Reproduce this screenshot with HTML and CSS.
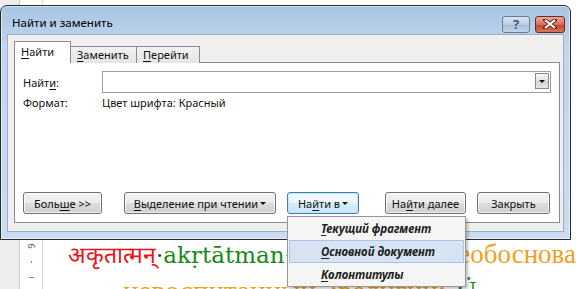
FILE: index.html
```html
<!DOCTYPE html>
<html lang="ru">
<head>
    <meta charset="UTF-8">
    <title>Найти и заменить</title>
    <link rel="stylesheet" href="styles.css">
</head>
<body>
    <div class="doc">
        <div class="ruler-gap"></div>
        <div class="ruler-strip">
            <span class="ruler-num">6</span>
            <span class="tick"></span>
            <span class="tick long"></span>
        </div>
        <div class="page">
            <div class="line line1">
                <span class="red">अकृतात्मन्</span><span class="dot">·</span><span class="green">akṛtātman</span><span class="dot">·</span><span class="orange">необоснованный</span>
            </div>
            <div class="line line2">
                <span class="orange">невоспитанный</span><span class="green">·</span><span class="orange">:религии:</span><span class="pink">·</span><span class="green">Ü</span>
            </div>
        </div>
    </div>

    <div class="dialog">
        <div class="titlebar">
            <span class="title">Найти и заменить</span>
            <div class="caption-buttons">
                <div class="cap-btn help">?</div>
                <div class="cap-btn close">
                    <svg width="14" height="10" viewBox="0 0 14 10">
                        <path d="M2 1 L12 9 M12 1 L2 9" stroke="#5a1a12" stroke-width="3.6" stroke-linecap="square"/>
                        <path d="M2 1 L12 9 M12 1 L2 9" stroke="#fff" stroke-width="2.2"/>
                    </svg>
                </div>
            </div>
        </div>
        <div class="client">
            <div class="tabs">
                <div class="tab active"><u>Н</u>айти</div>
                <div class="tab t2"><u>З</u>аменить</div>
                <div class="tab t3"><u>П</u>ерейти</div>
            </div>
            <div class="pane">
                <div class="row">
                    <span class="label">Найт<u>и</u>:</span>
                    <div class="combo">
                        <div class="combo-btn"><span class="arrow"></span></div>
                    </div>
                </div>
                <div class="row format">
                    <span class="label">Формат:</span>
                    <span>Цвет шрифта: Красный</span>
                </div>
                <div class="buttons">
                    <div class="btn more">Боль<u>ш</u>е &gt;&gt;</div>
                    <div class="btn reading"><u>В</u>ыделение при чтении <span class="tri"></span></div>
                    <div class="btn findin">На<u>й</u>ти в <span class="tri"></span></div>
                    <div class="btn next">На<u>й</u>ти далее</div>
                    <div class="btn closebtn">Закрыть</div>
                </div>
            </div>
        </div>
    </div>

    <div class="menu">
        <div class="menu-item"><u>Т</u>екущий фрагмент</div>
        <div class="menu-item selected"><u>О</u>сновной документ</div>
        <div class="menu-item"><u>К</u>олонтитулы</div>
    </div>
</body>
</html>
```

FILE: styles.css
```css
body {
    margin: 0;
    width: 576px;
    height: 289px;
    overflow: hidden;
    position: relative;
    background: #fff;
    font-family: "Noto Sans", Arial, sans-serif;
    font-size: 11px;
    color: #111;
}
u {
    text-decoration-thickness: 1px;
    text-underline-offset: 2px;
}

/* document behind the dialog */
.doc {
    display: flex;
    height: 289px;
    overflow: hidden;
}
.ruler-gap {
    flex-shrink: 0;
    width: 19px;
    background: #eeeeee;
    border-right: 1px solid #cfcfcf;
}
.ruler-strip {
    flex-shrink: 0;
    width: 23px;
    background: #fff;
    border-right: 1px solid #d8d8d8;
    display: flex;
    flex-direction: column;
    align-items: center;
    padding-top: 241px;
    box-sizing: border-box;
}
.ruler-num {
    font-size: 9px;
    color: #555;
    transform: rotate(90deg);
    line-height: 10px;
}
.tick {
    width: 1px;
    height: 2px;
    background: #888;
    margin-top: 10px;
}
.tick.long {
    width: 5px;
    height: 1px;
    margin-top: 14px;
}
.page {
    flex: 1;
    min-width: 0;
    padding-left: 25px;
    font-family: "DejaVu Serif", "Liberation Serif", serif;
    font-size: 23px;
    white-space: nowrap;
}
.line {
    height: 30px;
    line-height: 30px;
}
.line1 {
    margin-top: 239px;
}
.line1 .red {
    font-size: 23px;
}
.line1 .orange {
    font-size: 27px;
    font-family: "Liberation Serif", serif;
    margin-left: 152px;
}
.line2 {
    margin-top: 7px;
    padding-left: 55px;
    font-family: "Liberation Serif", serif;
    font-size: 29px;
}
.line2 .orange + .green {
    margin: 0 2px;
}
.red { color: #e8141a; }
.green { color: #178a17; }
.orange { color: #f0a020; }
.pink { color: #e020d0; }
.dot { color: #333; }

/* the dialog window */
.dialog {
    position: absolute;
    left: 0;
    top: 5px;
    width: 571px;
    height: 235px;
    box-sizing: border-box;
    border: 1px solid #2b2b2b;
    border-radius: 7px 7px 0 0;
    background: linear-gradient(#a8c4e2, #c0d6ee 40px, #c9dcf0);
    display: flex;
    flex-direction: column;
    box-shadow: inset 0 0 0 1px rgba(255, 255, 255, 0.55);
}
.titlebar {
    height: 28px;
    display: flex;
    align-items: center;
    justify-content: space-between;
    padding-left: 11px;
    padding-right: 5px;
}
.title {
    color: #000;
    font-size: 11.5px;
    margin-top: 4px;
}
.caption-buttons {
    display: flex;
    gap: 5px;
    margin-top: 8px;
}
.cap-btn {
    height: 15px;
    border: 1px solid #6d7c8f;
    border-radius: 3px;
    display: flex;
    align-items: center;
    justify-content: center;
}
.help {
    width: 26px;
    background: linear-gradient(#d6e4f2, #b8cde4 50%, #a6bfdb 51%, #c2d6ec);
    color: #4a5a70;
    font-size: 13px;
    font-weight: bold;
    line-height: 15px;
}
.close {
    width: 28px;
    border-color: #6b2a20;
    background: linear-gradient(#e8a79a, #d4705e 50%, #c0432c 51%, #d6745c);
}

.client {
    flex: 1;
    margin: 0 6px 7px 6px;
    background: #f0f0f0;
    border: 1px solid #9aaec4;
    display: flex;
    flex-direction: column;
    padding: 6px 3px 8px 6px;
}
.tabs {
    display: flex;
    align-items: flex-end;
    height: 22px;
    position: relative;
    z-index: 1;
}
.tab {
    height: 17px;
    box-sizing: border-box;
    padding-left: 6px;
    border: 1px solid #898c95;
    border-bottom: none;
    background: linear-gradient(#f2f2f2, #e4e4e4);
    line-height: 16px;
}
.tab.active {
    width: 57px;
    height: 22px;
    line-height: 19px;
    background: #fff;
}
.t2 { width: 66px; border-left: none; }
.t3 { width: 63px; border-left: none; }
.pane {
    flex: 1;
    background: #fff;
    border: 1px solid #898c95;
    margin-top: -1px;
    padding: 8px 8px 8px 8px;
    display: flex;
    flex-direction: column;
}
.row {
    display: flex;
    align-items: center;
}
.label {
    width: 79px;
}
.combo {
    flex: 1;
    height: 18px;
    border: 1px solid #a0a0a0;
    display: flex;
    justify-content: flex-end;
    padding: 1px;
}
.combo-btn {
    width: 14px;
    height: 16px;
    box-sizing: border-box;
    border: 1px solid #8a8a8a;
    background: linear-gradient(#f6f6f6, #e2e2e2 50%, #d4d4d4 51%, #e6e6e6);
    display: flex;
    align-items: center;
    justify-content: center;
}
.arrow, .tri {
    display: inline-block;
    width: 0;
    height: 0;
    border-left: 3px solid transparent;
    border-right: 3px solid transparent;
    border-top: 3px solid #111;
}
.tri {
    vertical-align: 2px;
    margin-left: 2px;
}
.format {
    margin-top: 0;
    height: 18px;
}
.buttons {
    margin-top: auto;
    display: flex;
}
.btn {
    height: 20px;
    border: 1px solid #707070;
    border-radius: 3px;
    background: linear-gradient(#f2f2f2, #ebebeb 50%, #dddddd 51%, #cfcfcf);
    box-shadow: inset 0 0 0 1px rgba(255, 255, 255, 0.7);
    display: flex;
    align-items: center;
    justify-content: center;
    white-space: nowrap;
}
.more { width: 77px; }
.reading { width: 150px; margin-left: 22px; }
.findin {
    width: 70px;
    margin-left: 11px;
    border-color: #3c7fb1;
    background: linear-gradient(#f4fafe, #e8f4fb 50%, #d6ecf8 51%, #cbe5f5);
    box-shadow: inset 0 0 0 1px #c6e4f7;
}
.next { width: 79px; margin-left: 26px; }
.closebtn { width: 71px; margin-left: 11px; }

/* drop-down of "Найти в" */
.menu {
    position: absolute;
    left: 287px;
    top: 216px;
    width: 175px;
    padding: 0 1px;
    background: #f5f5f5;
    border: 1px solid #979797;
    box-shadow: 2px 2px 3px rgba(0, 0, 0, 0.25);
}
.menu-item {
    height: 21px;
    line-height: 21px;
    padding-left: 31px;
    font-weight: bold;
    font-style: italic;
    font-size: 11.5px;
    color: #222;
    border: 1px solid transparent;
}
.menu-item.selected {
    background: #d7e3f3;
    border-color: #a8c4e8;
}
```
